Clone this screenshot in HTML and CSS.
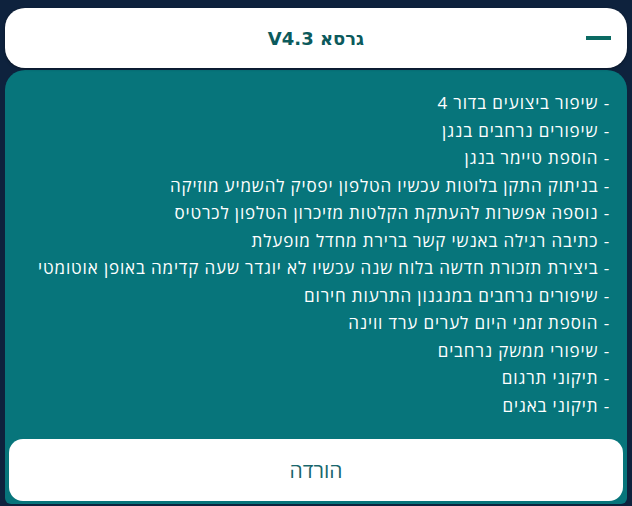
FILE: index.html
```html
<!DOCTYPE html>
<html lang="he" dir="rtl">
<head>
<meta charset="utf-8">
<link rel="stylesheet" href="styles.css">
</head>
<body>
<div class="wrap">
  <div class="header">
    <span class="minus"></span>
    <span class="title">גרסא V4.3</span>
  </div>
  <div class="panel">
    <ul class="notes">
      <li>- שיפור ביצועים בדור 4</li>
      <li>- שיפורים נרחבים בנגן</li>
      <li>- הוספת טיימר בנגן</li>
      <li>- בניתוק התקן בלוטות עכשיו הטלפון יפסיק להשמיע מוזיקה</li>
      <li>- נוספה אפשרות להעתקת הקלטות מזיכרון הטלפון לכרטיס</li>
      <li>- כתיבה רגילה באנשי קשר ברירת מחדל מופעלת</li>
      <li>- ביצירת תזכורת חדשה בלוח שנה עכשיו לא יוגדר שעה קדימה באופן אוטומטי</li>
      <li>- שיפורים נרחבים במנגנון התרעות חירום</li>
      <li>- הוספת זמני היום לערים ערד ווינה</li>
      <li>- שיפורי ממשק נרחבים</li>
      <li>- תיקוני תרגום</li>
      <li>- תיקוני באגים</li>
    </ul>
    <button class="download">הורדה</button>
  </div>
</div>
</body>
</html>
```
FILE: styles.css
```css
html, body {
  margin: 0;
  padding: 0;
  background: #0e223d;
}
body {
  font-family: "Open Sans", "DejaVu Sans", sans-serif;
  width: 632px;
  height: 506px;
  overflow: hidden;
}
.wrap {
  padding: 8px 5px 0 5px;
  display: flex;
  flex-direction: column;
  gap: 2px;
}
.header {
  position: relative;
  z-index: 1;
  height: 60px;
  background: #ffffff;
  border-radius: 20px;
  display: flex;
  align-items: center;
  justify-content: center;
  box-shadow: 0 1px 3px rgba(0, 0, 0, 0.35);
}
.title {
  font-family: "DejaVu Sans", sans-serif;
  font-weight: 700;
  font-size: 18px;
  color: #0c5a5c;
}
.minus {
  position: absolute;
  right: 16px;
  top: 28px;
  width: 25px;
  height: 4px;
  background: #0b6a63;
}
.panel {
  background: #07757b;
  border-radius: 20px 20px 6px 6px;
  padding: 19px 4px 3px 4px;
  display: flex;
  flex-direction: column;
}
.notes {
  list-style: none;
  margin: 0;
  padding: 0 13px 0 0;
  color: #ffffff;
  font-size: 17px;
  letter-spacing: 0.86px;
  line-height: 27.5px;
}
.download {
  margin-top: 20px;
  height: 62px;
  background: #ffffff;
  border: none;
  border-radius: 14px;
  font-family: "Open Sans", "DejaVu Sans", sans-serif;
  font-size: 21px;
  color: #19676d;
}
```
